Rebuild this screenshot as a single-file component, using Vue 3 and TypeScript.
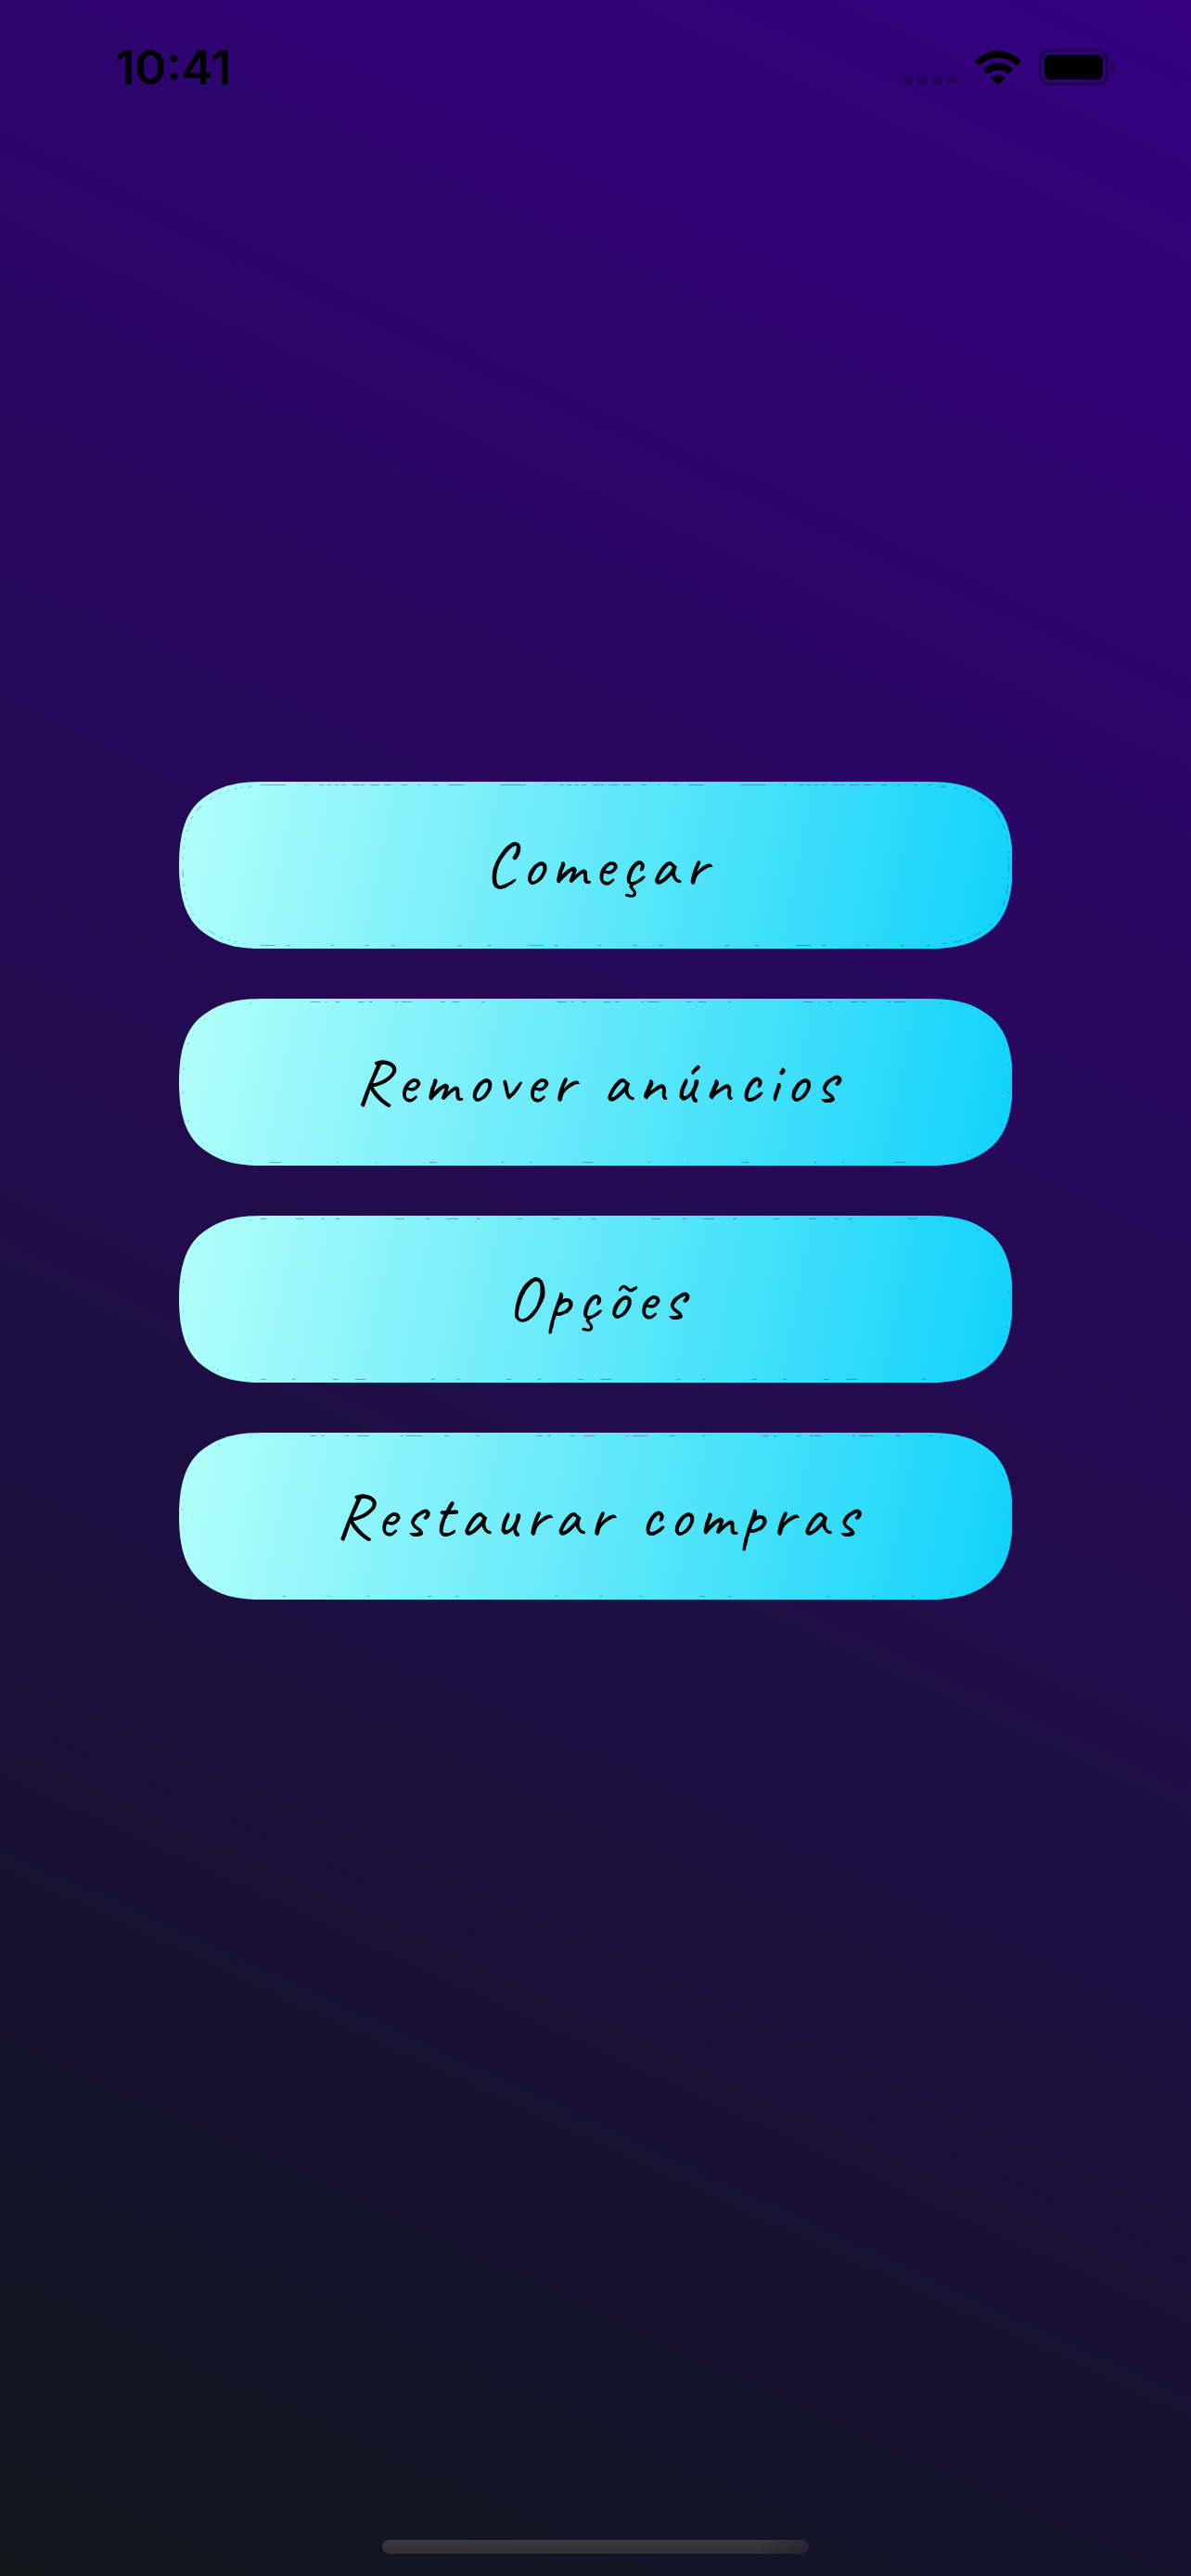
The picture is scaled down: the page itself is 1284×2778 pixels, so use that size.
<script setup lang="ts">
interface MenuItem {
  label: string
  top: string
  bottom: string
  left: string
  right: string
}

const items: MenuItem[] = [
  {
    label: 'Começar',
    top: '27 21 2 14 4 4 4 4 4 4 4 8 6 2 4 6 10 5 8 11 6 12 2 15 4 12 16 40',
    bottom: '16 12 4 44 3 34 4 24 4 68 4 28 4 40',
    left: '3 6 2 5 2 7 1 8 2 9 2 12 8 7',
    right: '6 9 3 12 2 5 3 4 8 6 2 6 10 7',
  },
  {
    label: 'Remover anúncios',
    top: '0 54 10 6 2 9 4 20 7 5 4 24 3 4 12 30 5 8 8 24 3 24',
    bottom: '0 10 12 60 2 40 2 56 8 70 3 28 2 44',
    left: '2 26 1 24 2 30',
    right: '2 20 1 28 2 34',
  },
  {
    label: 'Opções',
    top: '6 32 8 20 3 12 4 60 10 24 4 18 12 20 4 40',
    bottom: '6 28 4 40 6 18 12 70 4 24 3 50',
    left: '2 30 1 30 2 44',
    right: '1 40 2 36',
  },
  {
    label: 'Restaurar compras',
    top: '0 54 6 6 3 22 4 10 12 34 3 4 16 24 5 30 3 8',
    bottom: '0 24 3 46 2 40 3 62 5 26 3 80',
    left: '1 34 2 48',
    right: '2 42 1 36',
  },
]
</script>

<template>
  <div class="screen">
    <header class="status">
      <time class="clock">10:41</time>
      <div class="indicators">
        <div class="cell"><i></i><i></i><i></i><i></i></div>
        <svg class="wifi" viewBox="0 0 50 38" aria-hidden="true">
          <path d="M0.5 11.5 Q11 0.8 25 0.8 T49.5 11.5 Q50 12 49.5 12.6 L46 16 Q45 16.8 44 16 Q36 8.5 25 8.5 T6 16 Q5 16.8 4 16 L0.5 12.6 Q0 12 0.5 11.5Z" />
          <path d="M9.2 20.4 Q16 13.7 25 13.7 T40.8 20.4 Q41.4 21 40.8 21.6 L37 25.2 Q36 26 35 25.2 Q31 21.4 25 21.4 T15 25.2 Q14 26 13 25.2 L9.2 21.6 Q8.6 21 9.2 20.4Z" />
          <path d="M18 29.2 Q21 26.7 25 26.7 T32 29.2 Q33 30 32.2 30.8 L25.7 37.2 Q25 37.8 24.3 37.2 L17.8 30.8 Q17 30 18 29.2Z" />
        </svg>
        <svg class="battery" viewBox="0 0 82 40" aria-hidden="true">
          <rect x="1.5" y="1.5" width="72" height="36" rx="10" fill="none" stroke="#000" stroke-opacity=".4" stroke-width="3" />
          <rect x="6" y="6" width="63" height="27" rx="6" />
          <path d="M78 14 Q82 15.500 82 19.500 T78 25Z" fill-opacity=".45" />
        </svg>
      </div>
    </header>

    <main class="menu">
      <button v-for="item in items" :key="item.label" class="item" type="button">
        <svg class="plate" viewBox="0 0 900 180" preserveAspectRatio="none" aria-hidden="true">
          <defs>
            <linearGradient id="plate-fill" gradientUnits="userSpaceOnUse" x1="0" y1="0" x2="900" y2="180">
              <stop offset="0" stop-color="#b3fffa" />
              <stop offset="1" stop-color="#10d2fa" />
            </linearGradient>
          </defs>
          <path
            fill="url(#plate-fill)"
            d="M90 0H810C840 0 859 5 878 21C892 34 900 54 900 90C900 126 892 146 878 159C859 175 840 180 810 180H90C60 180 41 175 22 159C8 146 0 126 0 90C0 54 8 34 22 21C41 5 60 0 90 0Z"
          />
          <g class="grain">
            <path d="M88 3.500H812" :stroke-dasharray="item.top" />
            <path d="M88 176.500H812" :stroke-dasharray="item.bottom" />
            <path d="M78 5C56 7 42 11 25 25C11 38 4 56 4 90C4 124 11 142 25 155C42 169 56 173 78 175" :stroke-dasharray="item.left" />
            <path d="M822 5C844 7 858 11 875 25C889 38 896 56 896 90C896 124 889 142 875 155C858 169 844 173 822 175" :stroke-dasharray="item.right" />
          </g>
        </svg>
        <span class="label">{{ item.label }}</span>
      </button>
    </main>

    <footer class="home"><span class="bar"></span></footer>
  </div>
</template>

<style>
body {
  margin: 0;
}
</style>

<style scoped>
.screen {
  display: flex;
  flex-direction: column;
  min-height: 100vh;
  background: linear-gradient(204.8deg, #340080, #10171c);
  color: #000;
}

.status {
  display: flex;
  justify-content: space-between;
  align-items: center;
  height: 146px;
  padding: 0 82px 0 124px;
  box-sizing: border-box;
}

.clock {
  font: 600 51px/60px Inter, sans-serif;
}

.indicators {
  display: flex;
  align-items: center;
  gap: 19px;
}

.cell {
  display: flex;
  align-self: flex-end;
  gap: 6px;
  padding-bottom: 2px;
}

.cell i {
  width: 10px;
  height: 10px;
  border-radius: 3px;
  background: rgba(0, 0, 0, 0.25);
}

.wifi {
  width: 50px;
  height: 38px;
}

.battery {
  width: 82px;
  height: 40px;
}

.menu {
  flex: 1;
  display: flex;
  flex-direction: column;
  align-items: center;
  justify-content: center;
  gap: 54px;
}

.item {
  position: relative;
  width: 70%;
  height: 180px;
  padding: 0 0 0 8px;
  border: 0;
  background: none;
  color: #000;
  cursor: pointer;
}

.plate {
  position: absolute;
  inset: 0;
  width: 100%;
  height: 100%;
}

.grain {
  fill: none;
  stroke: #28288c;
  stroke-opacity: 0.4;
  stroke-width: 1;
}

.label {
  position: relative;
  font: 400 69px/84px Caveat, cursive;
  letter-spacing: 7px;
}

.home {
  display: flex;
  justify-content: center;
  align-items: flex-start;
  height: 356px;
}

.bar {
  align-self: flex-end;
  width: 460px;
  height: 15px;
  margin-bottom: 24px;
  border-radius: 8px;
  background:
    linear-gradient(100deg, transparent 88%, rgba(34, 30, 48, 0.7)),
    linear-gradient(#3c3b40, #303036);
}
</style>
